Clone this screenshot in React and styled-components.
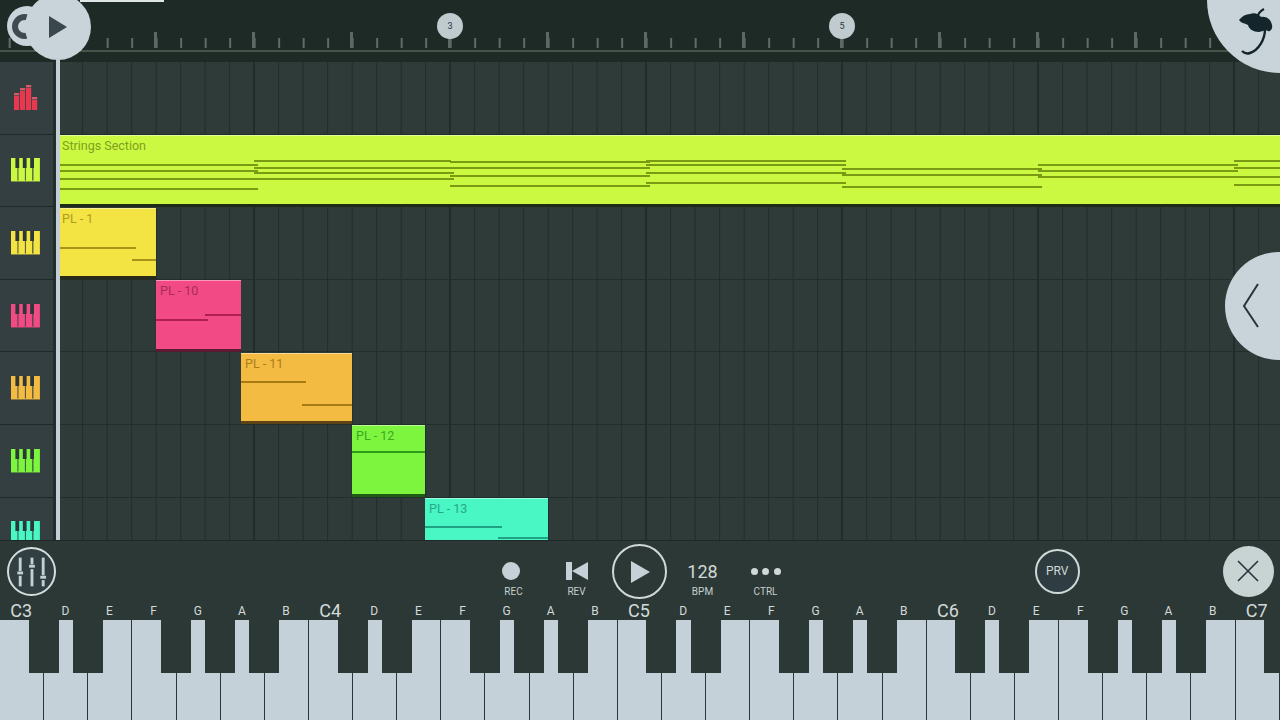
import styled, { createGlobalStyle } from "styled-components";

const KEY_W = 44.14;
const NOTE_NAMES = ["C", "D", "E", "F", "G", "A", "B"];

// C3 .. C7, one entry per white key
const keys = Array.from({ length: 29 }, (_, i) => {
  const name = NOTE_NAMES[i % 7];
  return {
    id: i,
    name,
    label: name === "C" ? `C${3 + i / 7}` : name,
    hasBlack: ["C", "D", "F", "G", "A"].includes(name),
  };
});

const COLORS = {
  lime: { fill: "#cbf942", text: "#7f9f1e", note: "#7a9a14", edge: "#1f2a18" },
  yellow: { fill: "#f3e343", text: "#b09b22", note: "#a8921a", edge: "#2a2a18" },
  pink: { fill: "#f24a84", text: "#a62c5a", note: "#b0204f", edge: "#5a1a32" },
  orange: { fill: "#f3bb42", text: "#ab7e1c", note: "#a87a14", edge: "#5c4414" },
  green: { fill: "#7df53f", text: "#3fa526", note: "#2f9a1a", edge: "#1d5c12" },
  teal: { fill: "#48f7c3", text: "#27a78a", note: "#1ea283", edge: "#1d5c4c" },
};

// note coordinates are page coordinates: [from x, to x, top y]
const tracks = [
  { id: "wave", icon: "eq" },
  {
    id: "strings",
    color: "lime",
    clip: {
      x: 58,
      y: 135,
      w: 1222,
      title: "Strings Section",
      notes: [
        [58, 258, 164],
        [58, 258, 170],
        [58, 454, 178],
        [58, 258, 188],
        [254, 451, 160],
        [254, 650, 167],
        [254, 454, 172],
        [450, 650, 161],
        [450, 650, 175],
        [450, 650, 185],
        [646, 846, 160],
        [646, 846, 164],
        [646, 846, 172],
        [646, 846, 182],
        [842, 1042, 168],
        [842, 1042, 174],
        [842, 1042, 186],
        [1038, 1238, 164],
        [1038, 1238, 170],
        [1038, 1238, 176],
        [1234, 1280, 160],
        [1234, 1280, 167],
        [1234, 1280, 176],
        [1234, 1280, 184],
      ],
    },
  },
  {
    id: "pl1",
    color: "yellow",
    clip: {
      x: 58,
      y: 208,
      w: 98,
      title: "PL - 1",
      notes: [
        [58, 136, 247],
        [132, 156, 259],
      ],
    },
  },
  {
    id: "pl10",
    color: "pink",
    clip: {
      x: 156,
      y: 280,
      w: 85,
      title: "PL - 10",
      notes: [
        [156, 208, 319],
        [205, 241, 314],
      ],
    },
  },
  {
    id: "pl11",
    color: "orange",
    clip: {
      x: 241,
      y: 353,
      w: 111,
      title: "PL - 11",
      notes: [
        [241, 306, 381],
        [302, 352, 404],
      ],
    },
  },
  {
    id: "pl12",
    color: "green",
    clip: {
      x: 352,
      y: 425,
      w: 73,
      title: "PL - 12",
      notes: [[352, 425, 451]],
    },
  },
  {
    id: "pl13",
    color: "teal",
    clip: {
      x: 425,
      y: 498,
      w: 123,
      title: "PL - 13",
      notes: [
        [425, 502, 526],
        [498, 548, 537],
      ],
    },
  },
];

function PianoIcon({ color }) {
  return (
    <svg width="29" height="24" viewBox="0 0 29 24">
      <rect y="22" width="29" height="2" fill={color} opacity="0.45" />
      {[0, 7.4, 14.8, 22.4].map((x) => (
        <rect key={x} x={x} width="6.5" height="23" fill={color} />
      ))}
      {[4.4, 11.8, 19.2].map((x) => (
        <rect key={x} x={x} width="3.8" height="10" fill="#2b3739" />
      ))}
    </svg>
  );
}

function EqIcon() {
  const bars = [
    [0, 8],
    [6, 3],
    [12, 0],
    [18, 12],
  ];
  return (
    <svg width="24" height="25" viewBox="0 0 24 25">
      {bars.map(([x, y]) => (
        <g key={x}>
          <rect x={x} y={y} width="5.2" height="2.4" fill="#d65a68" />
          <rect x={x} y={y + 3} width="5.2" height={22 - y} fill="#e8384f" />
        </g>
      ))}
    </svg>
  );
}

function MixerIcon() {
  const sliders = [
    [11.7, 25],
    [24, 18],
    [35.7, 29.5],
  ];
  return (
    <svg width="47" height="47" viewBox="0 0 47 47">
      {sliders.map(([x, y]) => (
        <g key={x} fill="#c4d0d4">
          <rect x={x - 1.5} y="9" width="3" height={y - 11} />
          <rect x={x - 3} y={y - 1.5} width="6" height="3" />
          <rect x={x - 1.5} y={y + 3} width="3" height={36 - y} />
        </g>
      ))}
    </svg>
  );
}

function FruitLogo() {
  return (
    <svg width="40" height="55" viewBox="0 0 40 55">
      <path
        d="M4 15 C7 11 11 9 15 9 C19 7 24 9 26 12 C31 11 36 14 37 20 C38 24 35 27 33 26 C31 24 28 26 24 27 C18 27 14 24 13 20 C10 18 7 19 4 15 Z"
        fill="#14262b"
      />
      <path d="M29 4 C25 6 23 9 22 13" fill="none" stroke="#14262b" strokeWidth="2.2" />
      <path
        d="M30 24 C30 34 24 45 15 48 C12 49 9 48 7 46"
        fill="none"
        stroke="#14262b"
        strokeWidth="2.4"
      />
    </svg>
  );
}

function TrackClip({ clip, color }) {
  const tone = COLORS[color];
  return (
    <Clip $left={clip.x - 56} $width={clip.w} $fill={tone.fill} $edge={tone.edge}>
      <ClipTitle $color={tone.text}>{clip.title}</ClipTitle>
      {clip.notes.map(([from, to, y]) => (
        <Note
          key={`${from}-${y}`}
          $left={from - clip.x}
          $top={y - clip.y - 1}
          $width={to - from}
          $color={tone.note}
        />
      ))}
    </Clip>
  );
}

export default function App() {
  return (
    <Screen>
      <GlobalStyle />

      <Ruler>
        <TickStrip />
        <Baseline />
      </Ruler>

      <Tracks>
        {tracks.map((track) => (
          <TrackRow key={track.id}>
            <TrackHeader>
              {track.icon === "eq" ? <EqIcon /> : <PianoIcon color={COLORS[track.color].fill} />}
            </TrackHeader>
            <Lane>{track.clip && <TrackClip clip={track.clip} color={track.color} />}</Lane>
          </TrackRow>
        ))}
      </Tracks>

      <Toolbar>
        <MixerButton>
          <MixerIcon />
        </MixerButton>
        <Transport>
          <TransportItem>
            <IconSlot>
              <RecDot />
            </IconSlot>
            <ItemLabel>REC</ItemLabel>
          </TransportItem>
          <TransportItem>
            <IconSlot>
              <svg width="22" height="18" viewBox="0 0 22 18">
                <rect width="6" height="18" fill="#c5d1d6" />
                <path d="M6 9 L22 0 V18 Z" fill="#c5d1d6" />
              </svg>
            </IconSlot>
            <ItemLabel>REV</ItemLabel>
          </TransportItem>
          <TransportItem>
            <PlayRing>
              <svg width="19" height="22" viewBox="0 0 19 22">
                <path d="M0 0 L19 11 L0 22 Z" fill="#c5d1d6" />
              </svg>
            </PlayRing>
          </TransportItem>
          <TransportItem>
            <IconSlot>
              <Tempo>128</Tempo>
            </IconSlot>
            <ItemLabel>BPM</ItemLabel>
          </TransportItem>
          <TransportItem>
            <IconSlot>
              <Dots>
                <Dot />
                <Dot />
                <Dot />
              </Dots>
            </IconSlot>
            <ItemLabel>CTRL</ItemLabel>
          </TransportItem>
        </Transport>
        <PreviewButton>PRV</PreviewButton>
        <CloseButton>
          <svg width="22" height="22" viewBox="0 0 22 22">
            <path d="M1 1 L21 21 M21 1 L1 21" stroke="#25333a" strokeWidth="1.6" fill="none" />
          </svg>
        </CloseButton>
      </Toolbar>

      <NoteLabels>
        {keys.map((key) => (
          <NoteLabel key={key.id} $octave={key.name === "C"}>
            {key.label}
          </NoteLabel>
        ))}
      </NoteLabels>

      <Piano>
        {keys.map((key) => (
          <WhiteKey key={key.id}>{key.hasBlack && <BlackKey />}</WhiteKey>
        ))}
      </Piano>

      <ProgressBar />
      <LoopButton />
      <TopPlayButton>
        <svg width="18" height="22" viewBox="0 0 18 22">
          <path d="M0 0 L18 11 L0 22 Z" fill="#3a474d" />
        </svg>
      </TopPlayButton>
      <Marker $x={437}>3</Marker>
      <Marker $x={829}>5</Marker>
      <Playhead />
      <LogoBadge>
        <FruitLogo />
      </LogoBadge>
      <SideTab>
        <svg width="18" height="46" viewBox="0 0 18 46">
          <path d="M16 1 L2 23 L16 44" stroke="#27353a" strokeWidth="2" fill="none" />
        </svg>
      </SideTab>
    </Screen>
  );
}

const GlobalStyle = createGlobalStyle`
  html, body {
    margin: 0;
    padding: 0;
    background: #2c3835;
    font-family: Roboto, "Liberation Sans", sans-serif;
  }
`;

const Screen = styled.div`
  position: relative;
  display: flex;
  flex-direction: column;
  width: 1280px;
  height: 720px;
  overflow: hidden;
  background: #2c3835;
`;

const Ruler = styled.div`
  flex: none;
  height: 62px;
  padding-top: 32px;
  box-sizing: border-box;
  background: #1e2a26;
`;

const TickStrip = styled.div`
  height: 16px;
  background-image:
    linear-gradient(90deg, #5a6963 0 3px, transparent 3px),
    linear-gradient(90deg, #5f6d67 0 2px, transparent 2px);
  background-size: 98px 16px, 24.5px 10px;
  background-position: 56px bottom, 8.7px bottom;
  background-repeat: repeat-x;
`;

const Baseline = styled.div`
  height: 2px;
  margin-top: 2px;
  background: #465349;
`;

const Tracks = styled.div`
  flex: none;
  height: 478px;
  overflow: hidden;
`;

const TrackRow = styled.div`
  display: flex;
  height: 72.6px;
`;

const TrackHeader = styled.div`
  flex: none;
  display: flex;
  align-items: center;
  justify-content: center;
  box-sizing: border-box;
  width: 56px;
  padding-right: 2px;
  background: #333f41;
  border-right: 3px solid #222d2c;
  border-bottom: 1px solid #1f2a29;
`;

const Lane = styled.div`
  position: relative;
  flex: 1;
  box-sizing: border-box;
  border-bottom: 1px solid #232e2c;
  background-color: #2e3b39;
  background-image:
    linear-gradient(90deg, #222d2b 0 2px, transparent 2px),
    linear-gradient(90deg, #212c2a 0 1px, transparent 1px);
  background-size: 196px 100%, 24.5px 100%;
  background-position: 1px 0, 1.7px 0;
`;

const Clip = styled.div`
  position: absolute;
  top: 0.5px;
  left: ${(p) => p.$left}px;
  width: ${(p) => p.$width}px;
  height: 71.5px;
  box-sizing: border-box;
  padding: 2px 0 0 4px;
  overflow: hidden;
  background: ${(p) => p.$fill};
  border-top: 1px solid rgba(255, 255, 255, 0.45);
  border-bottom: 3px solid ${(p) => p.$edge};
`;

const ClipTitle = styled.div`
  font-size: 12.5px;
  line-height: 16px;
  color: ${(p) => p.$color};
`;

const Note = styled.div`
  position: absolute;
  left: ${(p) => p.$left}px;
  top: ${(p) => p.$top}px;
  width: ${(p) => p.$width}px;
  height: 2px;
  background: ${(p) => p.$color};
`;

const Toolbar = styled.div`
  flex: none;
  display: flex;
  align-items: center;
  box-sizing: border-box;
  height: 63px;
  padding: 0 0 2px 7px;
  border-top: 1px solid #1f2a28;
  background: #2c3835;
`;

const MixerButton = styled.div`
  display: flex;
  align-items: center;
  justify-content: center;
  box-sizing: border-box;
  width: 49px;
  height: 49px;
  border: 2px solid #d4dcdc;
  border-radius: 50%;
  background: #313e42;
`;

const Transport = styled.div`
  display: flex;
  margin-left: 426px;
`;

const TransportItem = styled.div`
  display: flex;
  flex-direction: column;
  align-items: center;
  box-sizing: border-box;
  width: 63px;
  height: 62px;
  padding-top: 19px;
`;

const IconSlot = styled.div`
  display: flex;
  align-items: center;
  justify-content: center;
  height: 24px;
`;

const ItemLabel = styled.div`
  margin-top: 3px;
  font-size: 10px;
  line-height: 12px;
  color: #c5cfd0;
`;

const RecDot = styled.div`
  width: 18px;
  height: 18px;
  margin-right: 6px;
  border-radius: 50%;
  background: #c5d1d6;
`;

const PlayRing = styled.div`
  display: flex;
  align-items: center;
  justify-content: center;
  flex: none;
  box-sizing: border-box;
  width: 55px;
  height: 55px;
  margin-top: -15px;
  padding-left: 2px;
  border: 2px solid #d0d8d8;
  border-radius: 50%;
`;

const Tempo = styled.div`
  font-size: 18px;
  color: #d0d8d8;
`;

const Dots = styled.div`
  display: flex;
  gap: 4.5px;
`;

const Dot = styled.div`
  width: 7px;
  height: 7px;
  border-radius: 50%;
  background: #d0d8d8;
`;

const PreviewButton = styled.div`
  display: flex;
  align-items: center;
  justify-content: center;
  box-sizing: border-box;
  width: 45px;
  height: 45px;
  margin-left: 237.7px;
  border: 2px solid #cfd8d8;
  border-radius: 50%;
  background: linear-gradient(#2d3a3c, #2f3e44);
  font-size: 12px;
  color: #d0d8d8;
`;

const CloseButton = styled.div`
  display: flex;
  align-items: center;
  justify-content: center;
  width: 51px;
  height: 51px;
  margin-left: 143.3px;
  border-radius: 50%;
  background: #c8d3d4;
`;

const NoteLabels = styled.div`
  flex: none;
  display: flex;
  box-sizing: border-box;
  height: 17px;
  margin-left: -0.8px;
`;

const NoteLabel = styled.div`
  flex: none;
  width: ${KEY_W}px;
  text-align: center;
  font-size: ${(p) => (p.$octave ? 18 : 12)}px;
  line-height: 16px;
  color: #d3dada;
`;

const Piano = styled.div`
  flex: 1;
  display: flex;
  overflow: hidden;
`;

const WhiteKey = styled.div`
  position: relative;
  flex: none;
  box-sizing: border-box;
  width: ${KEY_W}px;
  background: #c4d1d8;
  border-right: 1px solid #2b363a;
`;

const BlackKey = styled.div`
  position: absolute;
  z-index: 1;
  top: 0;
  right: -15.5px;
  width: 30px;
  height: 53px;
  background: #2c3835;
`;

const ProgressBar = styled.div`
  position: absolute;
  top: 0;
  left: 80px;
  width: 84px;
  height: 2px;
  background: #dfe6e6;
`;

const LoopButton = styled.div`
  position: absolute;
  top: 6px;
  left: 7px;
  display: flex;
  align-items: center;
  box-sizing: border-box;
  width: 40px;
  height: 40px;
  padding-left: 5px;
  border-radius: 50%;
  background: #c8d3da;

  &::before {
    content: "";
    box-sizing: border-box;
    width: 25px;
    height: 25px;
    border: 6px solid #3d4b50;
    border-radius: 50%;
  }
`;

const TopPlayButton = styled.div`
  position: absolute;
  top: -6px;
  left: 25px;
  display: flex;
  align-items: center;
  justify-content: center;
  width: 66px;
  height: 66px;
  border-radius: 50%;
  background: #c8d3da;
`;

const Marker = styled.div`
  position: absolute;
  top: 13px;
  left: ${(p) => p.$x}px;
  display: flex;
  align-items: center;
  justify-content: center;
  width: 26px;
  height: 26px;
  border-radius: 50%;
  background: #bfcbcf;
  font-size: 9px;
  color: #27353a;
`;

const Playhead = styled.div`
  position: absolute;
  top: 58px;
  left: 56px;
  width: 4px;
  height: 482px;
  background: #c3ced6;
`;

const LogoBadge = styled.div`
  position: absolute;
  top: 0;
  right: 0;
  display: flex;
  align-items: flex-start;
  justify-content: flex-end;
  box-sizing: border-box;
  width: 73px;
  height: 73px;
  padding: 5px 5px 0 0;
  border-bottom-left-radius: 73px;
  background: #c8d3da;
`;

const SideTab = styled.div`
  position: absolute;
  top: 252px;
  right: 0;
  display: flex;
  align-items: center;
  box-sizing: border-box;
  width: 55px;
  height: 108px;
  padding-left: 17px;
  border-radius: 54px 0 0 54px;
  background: #c8d3da;
`;
